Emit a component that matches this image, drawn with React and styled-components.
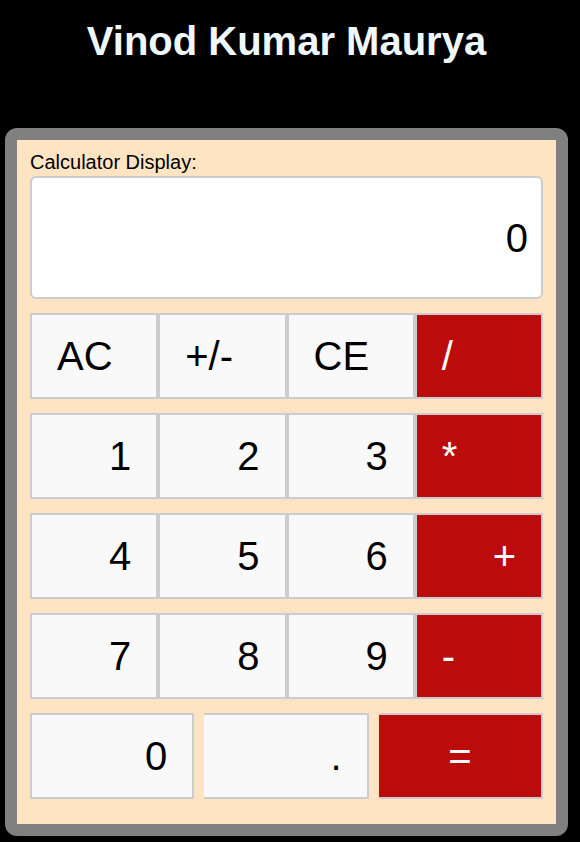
import React, { useState } from "react";
import styled, { createGlobalStyle } from "styled-components";

const GlobalStyle = createGlobalStyle`
  html, body {
    margin: 0;
    padding: 0;
    background-color: #000;
  }
  body {
    font-family: "Liberation Sans", Arial, sans-serif;
  }
`;

// 버튼 배치 (위 ~ 아래 순서)
const rows = [
  [
    { label: "AC", align: "left" },
    { label: "+/-", align: "left" },
    { label: "CE", align: "left" },
    { label: "/", align: "left", op: true },
  ],
  [
    { label: "1", align: "right" },
    { label: "2", align: "right" },
    { label: "3", align: "right" },
    { label: "*", align: "left", op: true },
  ],
  [
    { label: "4", align: "right" },
    { label: "5", align: "right" },
    { label: "6", align: "right" },
    { label: "+", align: "right", op: true },
  ],
  [
    { label: "7", align: "right" },
    { label: "8", align: "right" },
    { label: "9", align: "right" },
    { label: "-", align: "left", op: true },
  ],
];

const lastRow = [
  { label: "0", align: "right" },
  { label: ".", align: "right", noLeft: true },
  { label: "=", align: "center", op: true, noLeft: true },
];

function App() {
  const [display] = useState("0");

  return (
    <>
      <GlobalStyle />
      <Page>
        <Title>Vinod Kumar Maurya</Title>
        <Calculator>
          <Label>Calculator Display:</Label>
          <Display>{display}</Display>
          {rows.map((row, i) => (
            <KeyRow key={i}>
              {row.map((k) => (
                <Key key={k.label} $align={k.align} $op={k.op}>
                  {k.label}
                </Key>
              ))}
            </KeyRow>
          ))}
          <LastRow>
            {lastRow.map((k) => (
              <Key key={k.label} $align={k.align} $op={k.op} $noLeft={k.noLeft}>
                {k.label}
              </Key>
            ))}
          </LastRow>
        </Calculator>
      </Page>
    </>
  );
}

export default App;

const Page = styled.div`
  width: 573px;
  display: flex;
  flex-direction: column;
  align-items: center;
`;

const Title = styled.h1`
  margin: 18px 0 64px;
  font-size: 40px;
  line-height: 46px;
  font-weight: bold;
  color: #f0f8ff;
  text-align: center;
`;

const Calculator = styled.div`
  box-sizing: border-box;
  width: 563px;
  margin-left: 5px;
  align-self: flex-start;
  border: 12px solid #808080;
  border-radius: 12px;
  background-color: #ffe4c4;
  padding: 11px 13px 25px;
  display: flex;
  flex-direction: column;
  gap: 14px;
`;

const Label = styled.div`
  font-size: 20px;
  line-height: 23px;
  color: #000;
  margin-bottom: -12px;
`;

const Display = styled.div`
  box-sizing: border-box;
  height: 123px;
  background-color: #fff;
  border: 2px solid #ccc;
  border-radius: 6px;
  padding-right: 13px;
  display: flex;
  align-items: center;
  justify-content: flex-end;
  font-size: 40px;
  line-height: 46px;
  color: #000;
`;

const KeyRow = styled.div`
  display: grid;
  grid-template-columns: repeat(4, 1fr);
  height: 86px;
`;

const LastRow = styled.div`
  display: grid;
  grid-template-columns: repeat(3, 1fr);
  column-gap: 10px;
  height: 86px;
`;

const Key = styled.button`
  box-sizing: border-box;
  height: 86px;
  margin: 0;
  padding: 0 25px;
  border: 2px solid #ccc;
  border-left-width: ${(p) => (p.$noLeft ? "0" : "2px")};
  border-radius: 0;
  background-color: ${(p) => (p.$op ? "#bb0b0b" : "#f9f9f9")};
  color: ${(p) => (p.$op ? "#fff" : "#000")};
  font-family: "Liberation Sans", Arial, sans-serif;
  font-size: 40px;
  line-height: 46px;
  text-align: ${(p) => p.$align};
  cursor: pointer;
`;
